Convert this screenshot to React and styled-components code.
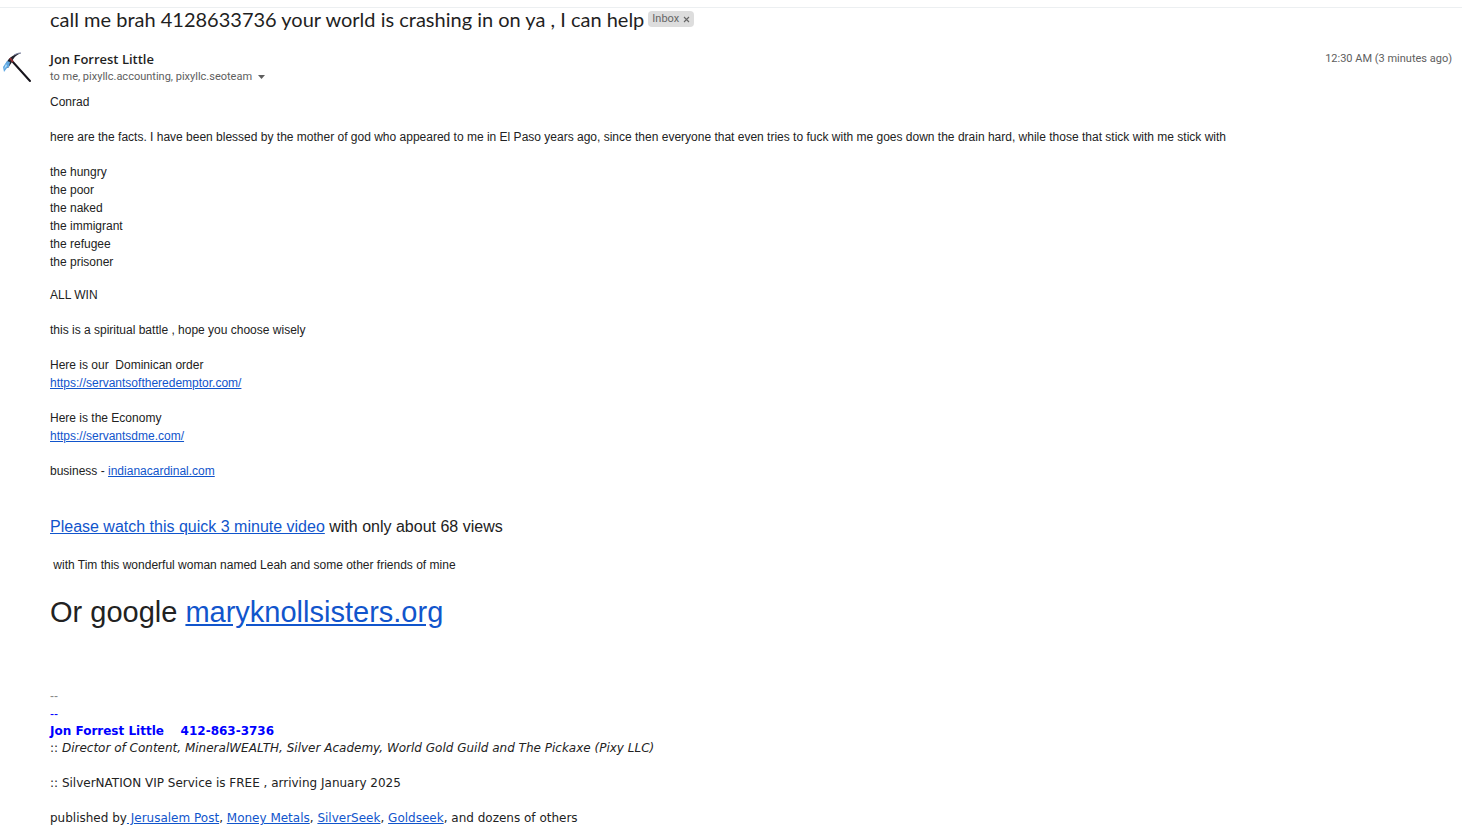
import React from "react";
import styled, { createGlobalStyle } from "styled-components";

const GlobalStyle = createGlobalStyle`
  * {
    box-sizing: border-box;
  }
  body {
    margin: 0;
    background: #ffffff;
    color: #222222;
    font-family: Arial, "Liberation Sans", sans-serif;
    font-size: 12px;
    line-height: 18px;
  }
`;

const Page = styled.main`
  padding-top: 7px;
`;

const SubjectBar = styled.header`
  display: flex;
  align-items: flex-start;
  gap: 4px;
  padding-left: 50px;
  border-top: 1px solid #eceff1;
`;

const Subject = styled.h1`
  margin: 0;
  font-family: Lato, sans-serif;
  font-size: 20px;
  font-weight: 400;
  line-height: 22px;
  color: #1f1f1f;
`;

const Label = styled.span`
  display: flex;
  align-items: center;
  gap: 4px;
  height: 16px;
  margin-top: 3px;
  padding: 0 4px;
  border-radius: 4px;
  background: #dddddd;
  color: #666666;
  font-family: Roboto, sans-serif;
  font-size: 11px;
`;

const LabelRemove = styled.button`
  display: flex;
  padding: 0;
  border: 0;
  background: none;
  color: #666666;
  cursor: pointer;
`;

const Message = styled.article`
  display: grid;
  grid-template-columns: 50px 1fr;
  padding-top: 20px;
`;

const Avatar = styled.svg`
  width: 36px;
  height: 36px;
`;

const MessageHeader = styled.div`
  display: flex;
  justify-content: space-between;
  padding-right: 10px;
  font-family: Roboto, sans-serif;
  font-size: 11px;
  color: #5e5e5e;
`;

const Sender = styled.h2`
  margin: 0;
  font-family: "Open Sans", sans-serif;
  font-size: 13px;
  font-weight: 600;
  line-height: 18px;
  color: #1f1f1f;
`;

const Recipients = styled.div`
  display: flex;
  align-items: center;
  gap: 6px;
`;

const DetailsButton = styled.button`
  display: flex;
  padding: 0;
  border: 0;
  background: none;
  color: #5e5e5e;
  cursor: pointer;
`;

const Body = styled.div`
  display: flex;
  flex-direction: column;
  gap: 17px;
  padding-top: 7px;
`;

const Paragraph = styled.p`
  margin: 0;
  white-space: pre-wrap;
`;

const WinnerList = styled.ul`
  margin: 0 0 -2px;
  padding: 0;
  list-style: none;
`;

const Link = styled.a`
  color: #1155cc;
  text-decoration: underline;
`;

const VideoLine = styled(Paragraph)`
  padding-top: 18px;
  font-size: 16px;
  line-height: 24px;
`;

const GoogleLine = styled(Paragraph)`
  font-size: 29px;
  line-height: 42px;
`;

const Signature = styled.footer`
  display: flex;
  flex-direction: column;
  gap: 17px;
  padding: 37px 0 8px;
  font-family: Verdana, "DejaVu Sans", sans-serif;
`;

const SignatureMark = styled.div`
  font-family: Arial, "Liberation Sans", sans-serif;
  color: ${(props) => (props.$muted ? "#888888" : "#0000ff")};
`;

const SignatureName = styled.div`
  font-weight: 700;
  line-height: 16px;
  color: #0000ff;
  white-space: pre-wrap;
`;

const winners = [
  "the hungry",
  "the poor",
  "the naked",
  "the immigrant",
  "the refugee",
  "the prisoner",
];

function Pickaxe() {
  return (
    <Avatar viewBox="0 0 36 36" role="img" aria-label="Pickaxe">
      <path d="M12 11 30 31" stroke="#17141c" strokeWidth="2" strokeLinecap="round" />
      <path d="M5 16C7 9 13 4 21 3c-5 2-8 5-9 9l-4 6z" fill="#20202c" />
      <path d="M7 11 3 17l1 5 3-4 2-1 1-5z" fill="#5fa8e3" />
      <path d="m6 14-2 5 3-3z" fill="#b9e2fa" />
      <path d="m10 8 3 4" stroke="#8d3035" strokeWidth="2" />
      <path d="M14 5c2-1 4-2 7-2" stroke="#777d9d" fill="none" />
    </Avatar>
  );
}

export default function App() {
  return (
    <Page>
      <GlobalStyle />
      <SubjectBar>
        <Subject>call me brah 4128633736 your world is crashing in on ya , I can help</Subject>
        <Label>
          Inbox
          <LabelRemove aria-label="Remove label Inbox">
            <svg width="7" height="7" viewBox="0 0 7 7">
              <path d="m1 1 5 5M6 1 1 6" stroke="currentColor" strokeWidth="1.1" />
            </svg>
          </LabelRemove>
        </Label>
      </SubjectBar>
      <Message>
        <Pickaxe />
        <div>
          <MessageHeader>
            <div>
              <Sender>Jon Forrest Little</Sender>
              <Recipients>
                to me, pixyllc.accounting, pixyllc.seoteam
                <DetailsButton aria-label="Show details">
                  <svg width="7" height="4" viewBox="0 0 7 4">
                    <path d="M0 0h7L3.500 4z" fill="currentColor" />
                  </svg>
                </DetailsButton>
              </Recipients>
            </div>
            <time>12:30 AM (3 minutes ago)</time>
          </MessageHeader>
          <Body>
            <Paragraph>Conrad</Paragraph>
            <Paragraph>
              here are the facts. I have been blessed by the mother of god who appeared to me in El Paso years ago, since then everyone that even tries to fuck with me goes down the drain hard, while those that stick with me stick with
            </Paragraph>
            <WinnerList>
              {winners.map((name) => (
                <li key={name}>{name}</li>
              ))}
            </WinnerList>
            <Paragraph>ALL WIN</Paragraph>
            <Paragraph>this is a spiritual battle , hope you choose wisely</Paragraph>
            <Paragraph>
              {"Here is our  Dominican order"}
              <br />
              <Link href="https://servantsoftheredemptor.com/">https://servantsoftheredemptor.com/</Link>
            </Paragraph>
            <Paragraph>
              Here is the Economy
              <br />
              <Link href="https://servantsdme.com/">https://servantsdme.com/</Link>
            </Paragraph>
            <Paragraph>
              business - <Link href="https://indianacardinal.com">indianacardinal.com</Link>
            </Paragraph>
            <VideoLine>
              <Link href="#video">Please watch this quick 3 minute video</Link> with only about 68 views
            </VideoLine>
            <Paragraph>{" with Tim this wonderful woman named Leah and some other friends of mine"}</Paragraph>
            <GoogleLine>
              Or google <Link href="https://maryknollsisters.org">maryknollsisters.org</Link>
            </GoogleLine>
            <Signature>
              <div>
                <SignatureMark $muted>--</SignatureMark>
                <SignatureMark>--</SignatureMark>
                <SignatureName>{"Jon Forrest Little    412-863-3736"}</SignatureName>
                <div>
                  :: <em>Director of Content, MineralWEALTH, Silver Academy, World Gold Guild and The Pickaxe (Pixy LLC)</em>
                </div>
              </div>
              <div>:: SilverNATION VIP Service is FREE , arriving January 2025</div>
              <div>
                published by<Link href="#jerusalem-post"> Jerusalem Post</Link>,{" "}
                <Link href="#money-metals">Money Metals</Link>, <Link href="#silverseek">SilverSeek</Link>,{" "}
                <Link href="#goldseek">Goldseek</Link>, and dozens of others
              </div>
            </Signature>
          </Body>
        </div>
      </Message>
    </Page>
  );
}
